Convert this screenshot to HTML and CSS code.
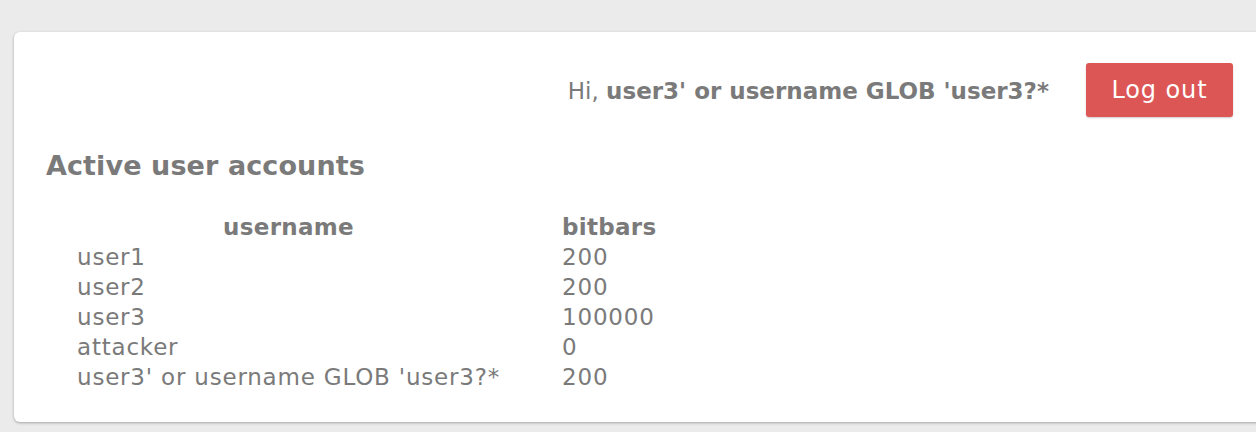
FILE: index.html
```html
<!DOCTYPE html>
<html>
<head>
<meta charset="utf-8">
<link rel="stylesheet" href="styles.css">
</head>
<body>
<div class="card">
  <div class="topbar">
    <span class="greet">Hi, <b>user3' or username GLOB 'user3?*</b></span>
    <button class="logout">Log out</button>
  </div>
  <h2 class="title">Active user accounts</h2>
  <table class="users">
    <thead>
      <tr><th class="c-name">username</th><th class="c-bits">bitbars</th></tr>
    </thead>
    <tbody>
      <tr><td>user1</td><td>200</td></tr>
      <tr><td>user2</td><td>200</td></tr>
      <tr><td>user3</td><td>100000</td></tr>
      <tr><td>attacker</td><td>0</td></tr>
      <tr><td>user3' or username GLOB 'user3?*</td><td>200</td></tr>
    </tbody>
  </table>
</div>
</body>
</html>
```
FILE: styles.css
```css
html { overflow: hidden; }
body {
  margin: 0;
  background: #ebebeb;
  font-family: "DejaVu Sans", sans-serif;
  color: #7a7a7a;
  width: 1256px;
  height: 432px;
}
.card {
  margin: 32px 0 0 14px;
  width: 1251px;
  height: 390px;
  box-sizing: border-box;
  background: #fff;
  border-radius: 6px;
  box-shadow: 0 1px 3px rgba(0,0,0,0.3);
  padding: 31px 32px 0 32px;
}
.topbar {
  display: flex;
  justify-content: flex-end;
  align-items: center;
  gap: 37px;
}
.greet { font-size: 23px; position: relative; top: 1px; }
.greet b { font-weight: 700; }
.logout {
  width: 147px;
  height: 54px;
  background: #dd5656;
  color: #fff;
  border: none;
  border-radius: 3px;
  font-family: inherit;
  font-size: 24px;
  letter-spacing: 0.9px;
  box-shadow: 0 1px 2px rgba(0,0,0,0.2);
}
.title {
  margin: 33px 0 0 0;
  font-size: 27px;
  font-weight: 700;
  letter-spacing: 0.1px;
}
.users {
  margin-top: 31px;
  border-collapse: collapse;
  font-size: 23px;
  letter-spacing: 0.8px;
}
.users th, .users td {
  padding: 0 31px;
  line-height: 30px;
}
.users th { font-weight: 700; letter-spacing: 0.3px; }
.users th.c-bits { text-align: left; }
.users td { text-align: left; }
```
